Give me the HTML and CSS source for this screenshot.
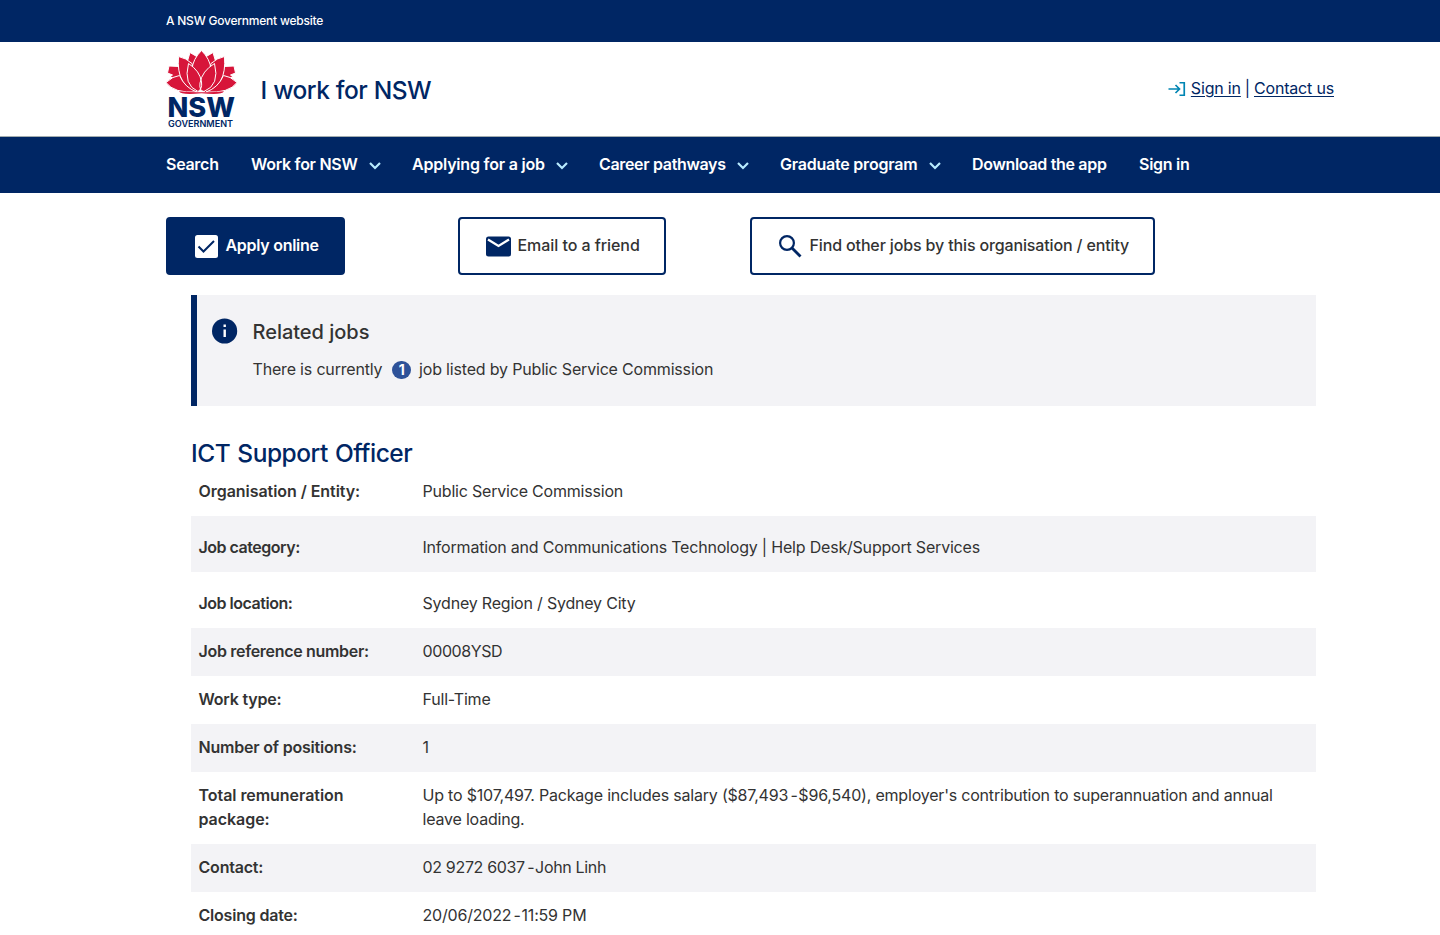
FILE: index.html
```html
<!DOCTYPE html>
<html lang="en">
<head>
<meta charset="utf-8">
<title>ICT Support Officer | I work for NSW</title>
<link rel="stylesheet" href="styles.css">
</head>
<body>
<div class="masthead"><span class="masthead-text">A NSW Government website</span></div>
<header class="header">
  <svg class="logo" width="72" height="80" viewBox="0 0 72 80">
    <g fill="#d7153a" stroke="#fff" stroke-width="1" stroke-linejoin="round">
      <path d="M3 15 L13 15.500 L16 30 L4 26 L6.500 24 L1.500 22Z M68 15 L58 15.500 L55 30 L67 26 L64.500 24 L69.500 22Z"/>
      <path d="M24 1.500 L31.500 6 L27 18 L21.500 10Z M47 1.500 L39.500 6 L44 18 L49.500 10Z"/>
      <path d="M12.500 5.500 Q20 7 26 12.500 L33 42 Q10 36 12.500 5.500Z M58.500 5.500 Q51 7 45 12.500 L38 42 Q61 36 58.500 5.500Z"/>
      <path d="M35.500 -0.500 Q44 8 45 18 L35.500 40 L26 18 Q27 8 35.500 -0.500Z"/>
      <path d="M0 31.500 Q7 25 13.500 24.500 Q19 37 31 41 Q8 42.500 0 31.500Z M71 31.500 Q64 25 57.500 24.500 Q52 37 40 41 Q63 42.500 71 31.500Z"/>
      <path d="M22.500 12.500 Q34 20 35.500 31 Q36.500 38 32 40.500 Q17 34 22.500 12.500Z M48.500 12.500 Q36 20 34 32 Q33 40 38 40.500 Q54 34 48.500 12.500Z"/>
    </g>
    <path fill="#d7153a" d="M13 40.300 Q25 41.600 35.500 41.200 Q47 41.600 58 40.300 Q56 44.300 35.500 42.200 Q15 44.300 13 40.300Z"/>
    <text class="logo-nsw" x="1.500" y="66.300" textLength="67.500" lengthAdjust="spacingAndGlyphs">NSW</text>
    <text class="logo-gov" x="2" y="75.700" textLength="65" lengthAdjust="spacingAndGlyphs">GOVERNMENT</text>
  </svg>
  <span class="site-name">I work for NSW</span>
  <div class="header-links">
    <svg class="signin-icon" width="18" height="16" viewBox="0 0 18 16" fill="none" stroke="#0085b3" stroke-width="1.700"><path d="M0.500 8H11.500M7.500 4l4 4-4 4M11.500 1.750H16.250V14.250H11.500"/></svg>
    <a href="#">Sign in</a><span class="divider">|</span><a href="#">Contact us</a>
  </div>
</header>
<nav class="nav">
  <a class="nav-item search">Search</a>
  <a class="nav-item work">Work for NSW<svg class="chev" width="12" height="8" viewBox="0 0 12 8"><path d="M1 1l5 5 5-5"/></svg></a>
  <a class="nav-item applying">Applying for a job<svg class="chev" width="12" height="8" viewBox="0 0 12 8"><path d="M1 1l5 5 5-5"/></svg></a>
  <a class="nav-item career">Career pathways<svg class="chev" width="12" height="8" viewBox="0 0 12 8"><path d="M1 1l5 5 5-5"/></svg></a>
  <a class="nav-item graduate">Graduate program<svg class="chev" width="12" height="8" viewBox="0 0 12 8"><path d="M1 1l5 5 5-5"/></svg></a>
  <a class="nav-item download">Download the app</a>
  <a class="nav-item signin">Sign in</a>
</nav>
<main class="main">
  <div class="actions">
    <div><a class="btn btn-primary"><svg width="25" height="25" viewBox="0 0 25 25"><rect x="1" y="1" width="23" height="23" rx="2.500" fill="#fff"/><path d="M4.500 12.500l5 5L20 7" fill="none" stroke="#002664" stroke-width="2"/></svg><span>Apply online</span></a></div>
    <div><a class="btn btn-email"><svg width="25" height="25" viewBox="0 0 25 25"><rect y="2.500" width="25" height="20" rx="2.500" fill="#002664"/><path d="M2 5.500l10.500 6.500L23 5.500" fill="none" stroke="#fff" stroke-width="2.200"/></svg><span>Email to a friend</span></a></div>
    <div><a class="btn btn-find"><svg width="25" height="25" viewBox="0 0 25 25" fill="none" stroke="#002664"><circle cx="9" cy="9" r="6.900" stroke-width="2.200"/><path d="M14 14l8.500 8.500" stroke-width="2.800"/></svg><span>Find other jobs by this organisation / entity</span></a></div>
  </div>
  <section class="callout">
    <svg class="info" width="26" height="26" viewBox="0 0 26 26"><circle cx="12.600" cy="13" r="12.600" fill="#002664"/><path d="M11.500 6.500h2.400v2.400h-2.400zM11.500 11.400h2.400v7.600h-2.400z" fill="#fff"/></svg>
    <div>
      <h4 class="callout-title">Related jobs</h4>
      <p class="callout-text"><span class="there">There is currently</span><span class="badge">1</span><span class="listed">job listed by Public Service Commission</span></p>
    </div>
  </section>
  <h2 class="job-title">ICT Support Officer</h2>
  <table class="details">
    <tr><th class="wide">Organisation / Entity:</th><td>Public Service Commission</td></tr>
    <tr class="tall"><th class="snug">Job category:</th><td>Information and Communications Technology | Help Desk/Support Services</td></tr>
    <tr class="tall"><th class="snug">Job location:</th><td>Sydney Region / Sydney City</td></tr>
    <tr><th class="mid">Job reference number:</th><td class="ref">00008YSD</td></tr>
    <tr><th>Work type:</th><td>Full-Time</td></tr>
    <tr><th>Number of positions:</th><td>1</td></tr>
    <tr><th class="wide">Total remuneration<br>package:</th><td>Up to $107,497. Package includes salary ($87,493<span class="dash"> - </span>$96,540), employer's contribution to superannuation and annual<br>leave loading.</td></tr>
    <tr><th>Contact:</th><td class="phone">02 9272 6037<span class="dash"> - </span>John Linh</td></tr>
    <tr><th>Closing date:</th><td>20/06/2022<span class="dash"> - </span>11:59 PM</td></tr>
  </table>
</main>
</body>
</html>
```
FILE: styles.css
```css
* { box-sizing: border-box; }
html { overflow: hidden; }
body { margin: 0; height: 935px; overflow: hidden; background: #fff; color: #333; font: 16px/24px Inter, "Liberation Sans", sans-serif; }
a { color: #002664; }
.masthead { height: 42px; background: #002664; color: #fff; padding: 0 166px; font-size: 12px; line-height: 41px; font-weight: 500; letter-spacing: -0.220px; }
.header { height: 95px; display: flex; align-items: center; padding: 0 106px 0 166px; border-bottom: 1px solid #a3adb0; color: #002664; }
.logo { margin-top: 4px; overflow: visible; }
.logo-nsw { font: 800 27px Inter, sans-serif; fill: #002664; }
.logo-gov { font: 600 8.300px Inter, sans-serif; fill: #002664; }
.site-name { margin-left: 22.500px; font-size: 24.500px; font-weight: 500; letter-spacing: -0.520px; word-spacing: 0.500px; margin-top: 1px; }
.header-links { margin: -2px 0 0 auto; display: flex; align-items: center; letter-spacing: -0.180px; }
.header-links a { text-underline-offset: 2px; }
.signin-icon { margin: 2px 5px 0 0; }
.divider { margin: 0 4px; }
.nav { height: 56px; background: #002664; display: flex; gap: 32px; padding: 0 166px; line-height: 54px; white-space: nowrap; }
.nav-item { height: 54px; color: #fff; font-weight: 600; letter-spacing: -0.280px; display: flex; align-items: center; }
.chev { margin: 3px -1px 0 auto; fill: none; stroke: #b8ebff; stroke-width: 2.200; }
.search { width: 53px; }
.work { width: 129px; }
.applying { width: 155px; letter-spacing: -0.200px; }
.career { width: 149px; letter-spacing: -0.330px; }
.graduate { width: 160px; letter-spacing: -0.220px; }
.download { width: 135px; letter-spacing: -0.320px; }
.main { padding: 24px 124px 0 166px; }
.actions { display: grid; grid-template-columns: 292px 292px 1fr; }
.btn { display: flex; align-items: center; height: 58px; border: 2px solid #002664; border-radius: 4px; padding: 0 0 0 26px; color: #333; font-weight: 500; letter-spacing: -0.140px; white-space: nowrap; }
.btn svg { margin-right: 6.500px; }
.btn span { margin-top: -2px; }
.btn-primary { width: 179px; background: #002664; color: #fff; font-weight: 600; letter-spacing: -0.280px; }
.btn-email { width: 208px; letter-spacing: -0.060px; }
.btn-find { width: 405px; }
.callout { display: flex; margin: 20px 0 0 25px; height: 111px; background: #f3f3f6; border-left: 6px solid #002664; padding: 23px 0 0 15px; }
.info { margin-right: 14.500px; }
.callout-title { margin: 0; font-size: 20px; line-height: 28px; font-weight: 500; letter-spacing: -0.020px; }
.callout-text { margin: 11px 0 0; display: flex; align-items: center; letter-spacing: -0.180px; }
.badge { width: 19px; height: 18px; margin: 1px 8px 0 9.700px; border-radius: 9px; background: #2e5299; color: #fff; font-size: 14px; line-height: 17px; font-weight: 700; text-align: center; }
.job-title { margin: 33px 0 0 25px; color: #002664; font-size: 24.500px; line-height: 29px; font-weight: 500; letter-spacing: -0.470px; word-spacing: 1px; }
.details { width: 1125px; margin-left: 25px; border-collapse: collapse; table-layout: fixed; white-space: nowrap; }
.details th, .details td { padding: 11px 8px 13px 7.500px; vertical-align: top; text-align: left; }
.details th { width: 224px; font-weight: 600; letter-spacing: -0.200px; }
.details .wide { letter-spacing: -0.050px; }
.details .snug { letter-spacing: -0.480px; }
.details .mid { letter-spacing: -0.310px; }
.details td { letter-spacing: -0.200px; }
.details .ref { letter-spacing: -0.400px; }
.details .phone { letter-spacing: -0.330px; }
.details .dash { letter-spacing: -2.200px; margin-right: 0.500px; }
.details .tall th, .details .tall td { padding-top: 19px; }
.details tr:nth-child(even) { background: #f3f3f6; }
```
